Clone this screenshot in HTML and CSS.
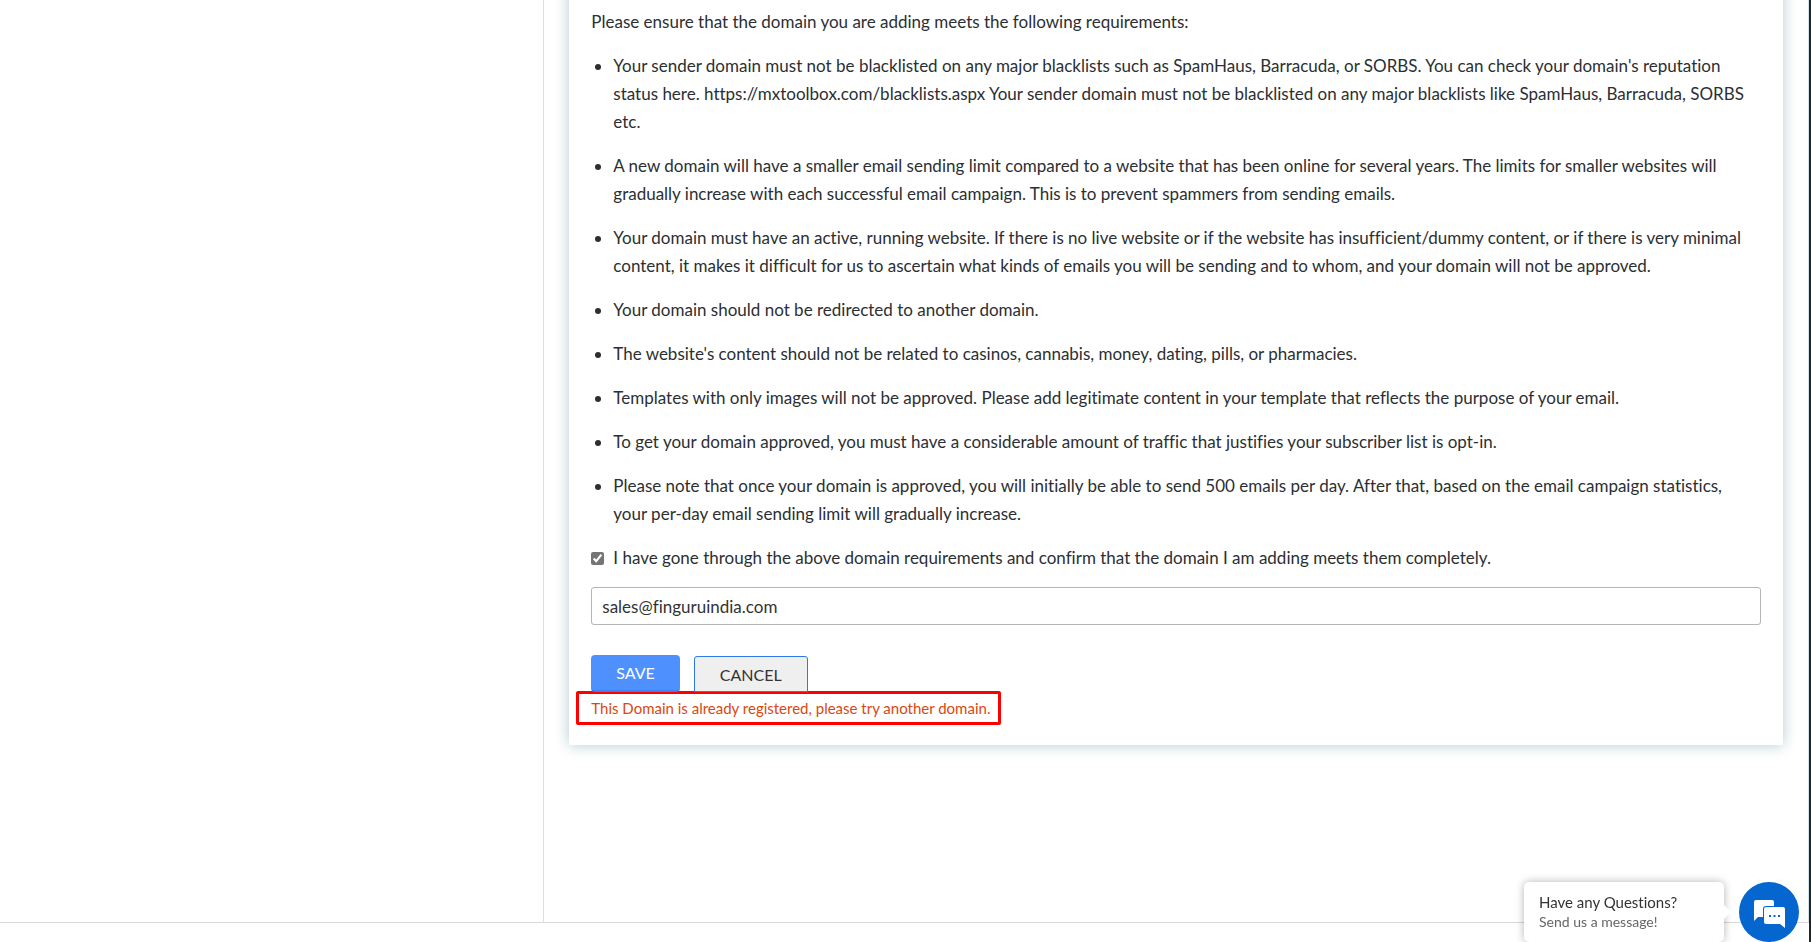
FILE: index.html
```html
<!DOCTYPE html>
<html lang="en">

<head>
    <meta charset="UTF-8">
    <meta name="viewport" content="width=device-width, initial-scale=1.0">
    <title>Add Domain</title>
    <link rel="stylesheet" href="styles.css">
</head>

<body>
    <div class="layout">
        <aside class="sidebar"></aside>
        <main class="content">
            <form class="card">
                <p class="intro">Please ensure that the domain you are adding meets the following requirements:</p>
                <ul class="requirements">
                    <li>Your sender domain must not be blacklisted on any major blacklists such as SpamHaus, Barracuda, or SORBS. You can check your domain's reputation status here. https://mxtoolbox.com/blacklists.aspx Your sender domain must not be blacklisted on any major blacklists like SpamHaus, Barracuda, SORBS etc.</li>
                    <li>A new domain will have a smaller email sending limit compared to a website that has been online for several years. The limits for smaller websites will gradually increase with each successful email campaign. This is to prevent spammers from sending emails.</li>
                    <li>Your domain must have an active, running website. If there is no live website or if the website has insufficient/dummy content, or if there is very minimal content, it makes it difficult for us to ascertain what kinds of emails you will be sending and to whom, and your domain will not be approved.</li>
                    <li>Your domain should not be redirected to another domain.</li>
                    <li>The website's content should not be related to casinos, cannabis, money, dating, pills, or pharmacies.</li>
                    <li>Templates with only images will not be approved. Please add legitimate content in your template that reflects the purpose of your email.</li>
                    <li>To get your domain approved, you must have a considerable amount of traffic that justifies your subscriber list is opt-in.</li>
                    <li>Please note that once your domain is approved, you will initially be able to send 500 emails per day. After that, based on the email campaign statistics, your per-day email sending limit will gradually increase.</li>
                </ul>
                <div class="confirm">
                    <input type="checkbox" id="confirm" class="confirm-box" checked>
                    <label for="confirm">I have gone through the above domain requirements and confirm that the domain I am adding meets them completely.</label>
                </div>
                <input type="text" class="domain-input" aria-label="Sender email" value="sales@finguruindia.com">
                <div class="actions">
                    <button type="button" class="btn btn-save">SAVE</button>
                    <button type="button" class="btn btn-cancel">CANCEL</button>
                </div>
                <p class="error">This Domain is already registered, please try another domain.</p>
            </form>
        </main>
    </div>
    <footer class="footer"></footer>

    <div class="chat">
        <div class="chat-bubble">
            <strong class="chat-title">Have any Questions?</strong>
            <span class="chat-text">Send us a message!</span>
        </div>
        <button type="button" class="chat-button" aria-label="Open chat">
            <svg width="60" height="60" viewBox="0 0 60 60">
                <path d="M17 18h16a2 2 0 0 1 2 2v4H27a3 3 0 0 0-3 3v8h-5l-4 4V20a2 2 0 0 1 2-2z" fill="#fff" />
                <path d="M27 25h17a2 2 0 0 1 2 2v19l-5-4H27a2 2 0 0 1-2-2V27a2 2 0 0 1 2-2z" fill="#fff" />
                <path d="M30 33h2v2h-2zM34.500 33h2v2h-2zM39 33h2v2h-2z" fill="#0566cf" />
            </svg>
        </button>
    </div>
</body>

</html>
```
FILE: styles.css
```css
* {
    box-sizing: border-box;
}

body {
    display: flex;
    flex-direction: column;
    height: 100vh;
    margin: 0;
    overflow: hidden;
    border-right: 2px solid #212529;
    background: #fff;
    color: #2b2f33;
    font-family: Lato, "Open Sans", sans-serif;
    font-size: 17px;
    font-variant-ligatures: none;
    line-height: 28px;
}

.layout {
    display: flex;
    flex: 1;
    min-height: 0;
    border-right: 1px solid #cfe3ed;
}

.sidebar {
    width: calc(30vw + 1px);
    border-right: 1px solid #cfe3ed;
}

.content {
    flex: 1;
    min-width: 0;
    padding: 0 25px;
}

/* the card runs on above the top of the window */
.card {
    margin-top: -24px;
    padding: 32px 22px 20px;
    background: #fff;
    box-shadow: 0 0 14px #b4cad0;
}

.intro {
    margin: 0 0 16px;
}

.requirements {
    margin: 0;
    padding: 0 12px 0 22px;
}

.requirements li {
    margin-bottom: 16px;
}

.confirm {
    display: flex;
    align-items: center;
    gap: 9px;
}

.confirm-box {
    width: 13px;
    height: 13px;
    margin: 0;
    accent-color: #757575;
}

.domain-input {
    display: block;
    width: 100%;
    height: 38px;
    margin-top: 15px;
    padding: 0 10px;
    border: 1px solid #b5b5b5;
    border-radius: 3px;
    color: #333;
    font: inherit;
    font-variant-ligatures: none;
}

.actions {
    display: flex;
    align-items: flex-end;
    gap: 14px;
    margin-top: 30px;
}

.btn {
    padding: 0 25px;
    font-family: inherit;
    font-size: 16px;
    cursor: pointer;
}

.btn-save {
    height: 37px;
    border: 0;
    border-bottom: 2px solid #3d80f0;
    border-radius: 4px;
    background: #4f90ff;
    color: #fff;
}

.btn-cancel {
    height: 36px;
    border: 1px solid #2f78ea;
    border-radius: 3px 3px 0 0;
    background: #efefef;
    color: #333;
}

.error {
    width: fit-content;
    margin: -1px 0 0 -15px;
    padding: 0 8px 0 12px;
    border: 3px solid #f00;
    border-radius: 2px;
    background: #fff;
    color: #d9480f;
    font-size: 15px;
}

.footer {
    height: 20px;
    border-top: 1px solid #d6d8da;
}

.chat {
    position: fixed;
    right: 12px;
    bottom: 0;
    display: flex;
    gap: 15px;
}

.chat-bubble {
    position: relative;
    display: flex;
    flex-direction: column;
    justify-content: center;
    width: 200px;
    height: 60px;
    padding: 0 15px;
    border-radius: 5px;
    background: #fff;
    box-shadow: 0 0 8px rgba(0, 0, 0, 0.3);
    line-height: 20px;
}

.chat-bubble::after {
    content: '';
    position: absolute;
    top: 25px;
    right: -5px;
    width: 10px;
    height: 10px;
    background: #fff;
    transform: rotate(45deg);
}

.chat-title {
    color: #333;
    font-size: 15px;
    font-weight: 400;
}

.chat-text {
    color: #666;
    font-size: 14px;
}

.chat-button {
    width: 60px;
    height: 60px;
    padding: 0;
    border: 0;
    border-radius: 50%;
    background: #0566cf;
    cursor: pointer;
}

.chat-button svg {
    display: block;
}
```
